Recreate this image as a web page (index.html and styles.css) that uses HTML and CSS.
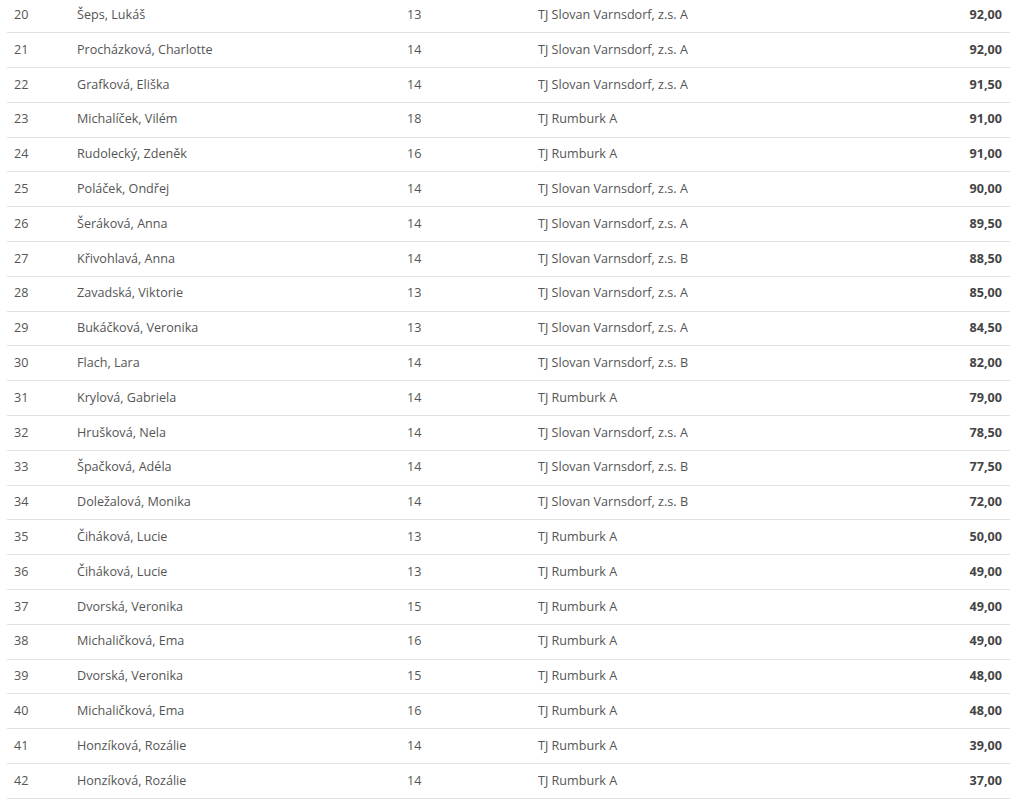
FILE: index.html
```html
<!DOCTYPE html>
<html lang="cs">
<head>
<meta charset="utf-8">
<link rel="stylesheet" href="styles.css">
</head>
<body>
<div class="wrap">
<table class="results">
<colgroup><col class="c-rank"><col class="c-name"><col class="c-age"><col class="c-club"><col class="c-score"></colgroup>
<tbody>
<tr><td>20</td><td>Šeps, Lukáš</td><td>13</td><td>TJ Slovan Varnsdorf, z.s. A</td><td class="score">92,00</td></tr>
<tr><td>21</td><td>Procházková, Charlotte</td><td>14</td><td>TJ Slovan Varnsdorf, z.s. A</td><td class="score">92,00</td></tr>
<tr><td>22</td><td>Grafková, Eliška</td><td>14</td><td>TJ Slovan Varnsdorf, z.s. A</td><td class="score">91,50</td></tr>
<tr><td>23</td><td>Michalíček, Vilém</td><td>18</td><td>TJ Rumburk A</td><td class="score">91,00</td></tr>
<tr><td>24</td><td>Rudolecký, Zdeněk</td><td>16</td><td>TJ Rumburk A</td><td class="score">91,00</td></tr>
<tr><td>25</td><td>Poláček, Ondřej</td><td>14</td><td>TJ Slovan Varnsdorf, z.s. A</td><td class="score">90,00</td></tr>
<tr><td>26</td><td>Šeráková, Anna</td><td>14</td><td>TJ Slovan Varnsdorf, z.s. A</td><td class="score">89,50</td></tr>
<tr><td>27</td><td>Křivohlavá, Anna</td><td>14</td><td>TJ Slovan Varnsdorf, z.s. B</td><td class="score">88,50</td></tr>
<tr><td>28</td><td>Zavadská, Viktorie</td><td>13</td><td>TJ Slovan Varnsdorf, z.s. A</td><td class="score">85,00</td></tr>
<tr><td>29</td><td>Bukáčková, Veronika</td><td>13</td><td>TJ Slovan Varnsdorf, z.s. A</td><td class="score">84,50</td></tr>
<tr><td>30</td><td>Flach, Lara</td><td>14</td><td>TJ Slovan Varnsdorf, z.s. B</td><td class="score">82,00</td></tr>
<tr><td>31</td><td>Krylová, Gabriela</td><td>14</td><td>TJ Rumburk A</td><td class="score">79,00</td></tr>
<tr><td>32</td><td>Hrušková, Nela</td><td>14</td><td>TJ Slovan Varnsdorf, z.s. A</td><td class="score">78,50</td></tr>
<tr><td>33</td><td>Špačková, Adéla</td><td>14</td><td>TJ Slovan Varnsdorf, z.s. B</td><td class="score">77,50</td></tr>
<tr><td>34</td><td>Doležalová, Monika</td><td>14</td><td>TJ Slovan Varnsdorf, z.s. B</td><td class="score">72,00</td></tr>
<tr><td>35</td><td>Čiháková, Lucie</td><td>13</td><td>TJ Rumburk A</td><td class="score">50,00</td></tr>
<tr><td>36</td><td>Čiháková, Lucie</td><td>13</td><td>TJ Rumburk A</td><td class="score">49,00</td></tr>
<tr><td>37</td><td>Dvorská, Veronika</td><td>15</td><td>TJ Rumburk A</td><td class="score">49,00</td></tr>
<tr><td>38</td><td>Michaličková, Ema</td><td>16</td><td>TJ Rumburk A</td><td class="score">49,00</td></tr>
<tr><td>39</td><td>Dvorská, Veronika</td><td>15</td><td>TJ Rumburk A</td><td class="score">48,00</td></tr>
<tr><td>40</td><td>Michaličková, Ema</td><td>16</td><td>TJ Rumburk A</td><td class="score">48,00</td></tr>
<tr><td>41</td><td>Honzíková, Rozálie</td><td>14</td><td>TJ Rumburk A</td><td class="score">39,00</td></tr>
<tr><td>42</td><td>Honzíková, Rozálie</td><td>14</td><td>TJ Rumburk A</td><td class="score">37,00</td></tr>
</tbody>
</table>
</div>
</body>
</html>
```

FILE: styles.css
```css
html, body {
  margin: 0;
  padding: 0;
  background: #fff;
}

body {
  font-family: "Open Sans", "Liberation Sans", sans-serif;
  font-size: 12.6px;
  color: #555;
}

.wrap {
  margin-top: -1.5px;
  padding-left: 7px;
  width: 1003px;
}

.results {
  width: 100%;
  border-collapse: collapse;
  table-layout: fixed;
}

.c-rank { width: 63px; }
.c-name { width: 330px; }
.c-age { width: 131px; }
.c-club { width: 300px; }
.c-score { width: auto; }

.results td {
  padding: 6.5px 7px;
  line-height: 20.8px;
  border-bottom: 1px solid #e2e2e2;
  white-space: nowrap;
  vertical-align: middle;
}

.results td.score {
  text-align: right;
  padding-right: 8px;
  font-weight: 700;
  color: #444;
}
```
